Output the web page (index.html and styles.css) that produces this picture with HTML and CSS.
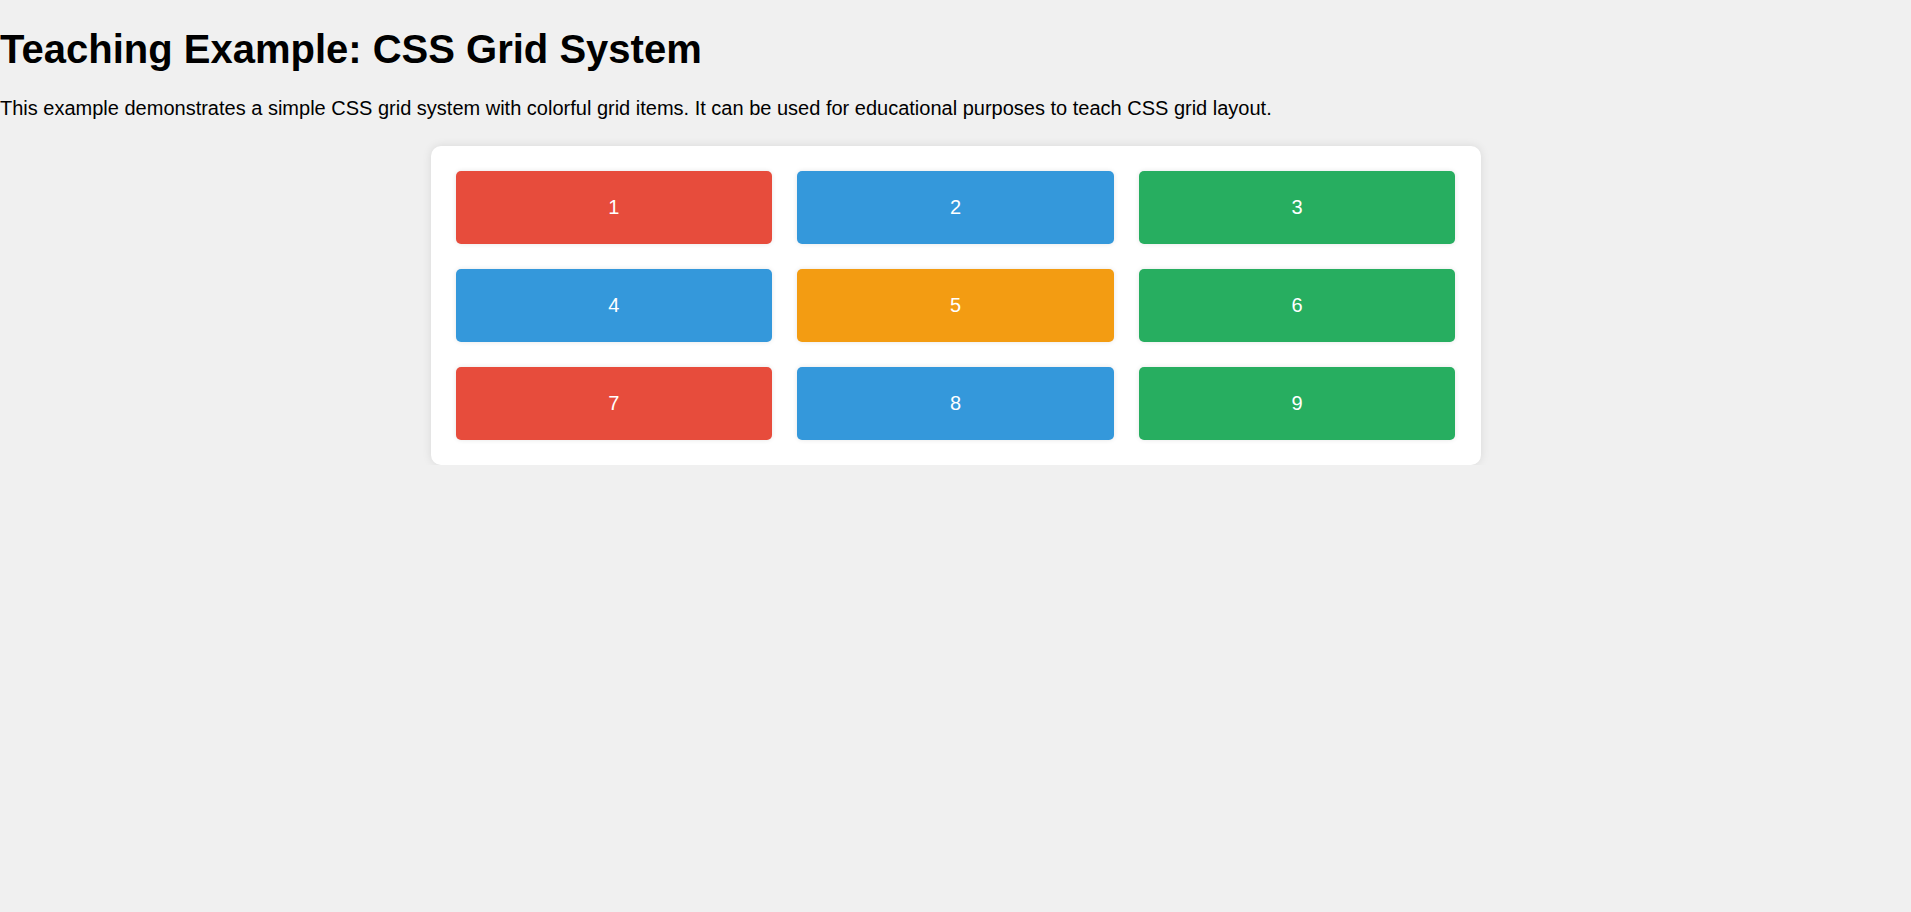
FILE: index.html
```html
<!DOCTYPE html>
<html lang="en">
<head>
<meta charset="UTF-8">
<title>Teaching Example: CSS Grid System</title>
<link rel="stylesheet" href="styles.css">
</head>
<body>
<h1 class="title">Teaching Example: CSS Grid System</h1>
<p class="intro">This example demonstrates a simple CSS grid system with colorful grid items. It can be used for educational purposes to teach CSS grid layout.</p>
<div class="grid">
  <div class="item red">1</div>
  <div class="item blue">2</div>
  <div class="item green">3</div>
  <div class="item blue">4</div>
  <div class="item orange">5</div>
  <div class="item green">6</div>
  <div class="item red">7</div>
  <div class="item blue">8</div>
  <div class="item green">9</div>
</div>
</body>
</html>
```

FILE: styles.css
```css
html, body {
  margin: 0;
  padding: 0;
}
body {
  background: #f0f0f0;
  font-family: "Liberation Sans", Arial, sans-serif;
  color: #000;
}
.title {
  font-size: 40px;
  font-weight: bold;
  line-height: 46px;
  margin: 26px 0 0 0;
}
.intro {
  font-size: 20px;
  line-height: 23px;
  margin: 25px 0 0 0;
}
.grid {
  display: grid;
  grid-template-columns: repeat(3, 1fr);
  gap: 25px;
  width: 1000px;
  padding: 25px;
  margin: 26px auto 0;
  background: #fff;
  border-radius: 10px;
  box-shadow: 0 0 10px rgba(0, 0, 0, 0.1);
}
.item {
  padding: 25px 0;
  text-align: center;
  color: #fff;
  font-size: 20px;
  line-height: 23px;
  border-radius: 5px;
  box-shadow: 0 0 5px rgba(0, 0, 0, 0.1);
}
.red { background: #e74c3c; }
.blue { background: #3498db; }
.green { background: #27ae60; }
.orange { background: #f39c12; }
```
